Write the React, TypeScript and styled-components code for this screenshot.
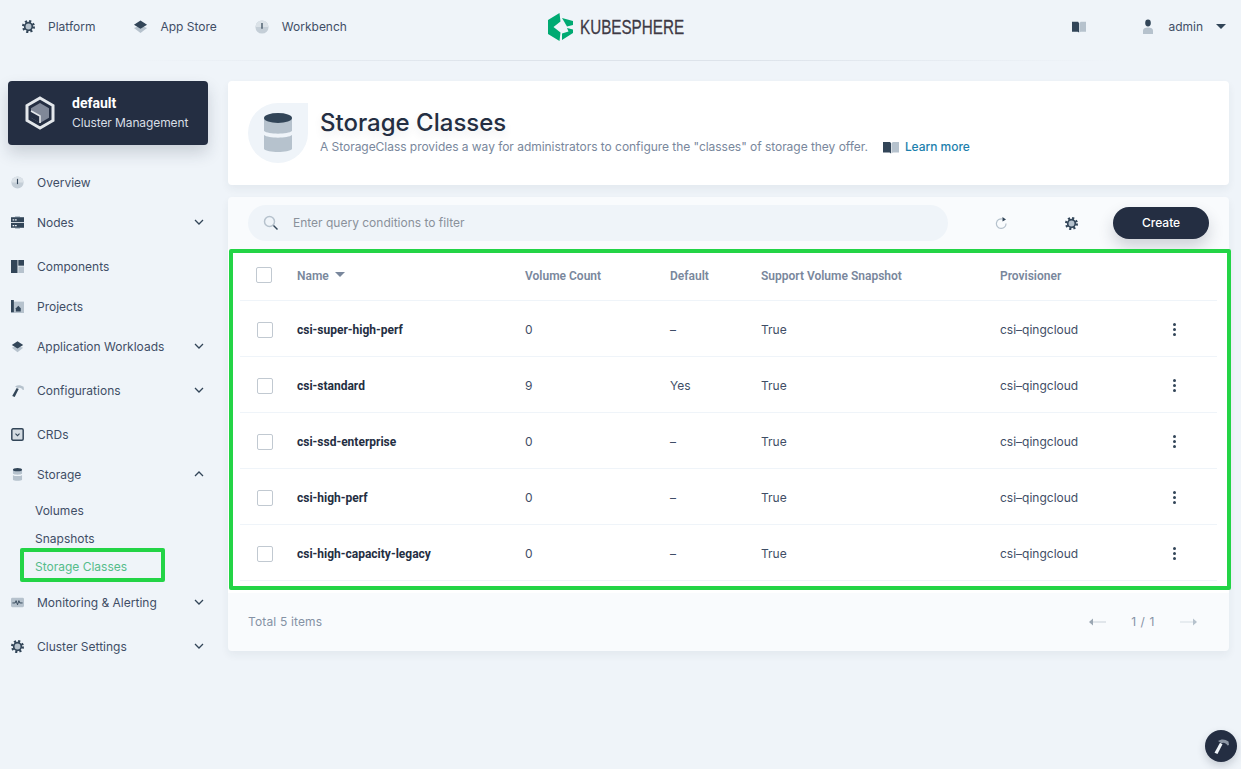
import styled, { createGlobalStyle } from "styled-components";
import type { ReactNode } from "react";

const DARK = "#324558";
const LIGHT = "#b6c2cd";

const GlobalStyle = createGlobalStyle`
  html, body {
    margin: 0;
    padding: 0;
    height: 769px;
    overflow: hidden;
    background: #eff4f9;
    font-family: Inter, "Liberation Sans", sans-serif;
    font-size: 12px;
    color: #242e42;
  }
  * { box-sizing: border-box; }
`;

const Header = styled.header`
  display: grid;
  grid-template-columns: 528px auto 1fr;
  align-items: center;
  height: 61px;
  padding: 0 15px 7px 20px;
  border-bottom: 1px solid transparent;
  border-image: linear-gradient(90deg, #eff4f9 10%, #dde3ea 40%, #dde3ea 60%, #eff4f9 90%) 1;
`;

const TopNav = styled.nav`
  display: flex;
  gap: 37px;
`;

const TopNavItem = styled.div`
  display: flex;
  align-items: center;
  gap: 12px;
  color: #3f4e66;
  line-height: 16px;
`;

const TopIcon = styled.span`
  display: flex;
  justify-content: center;
  width: 16px;
`;

const Logo = styled.div`
  display: flex;
  align-items: center;
  gap: 7px;
`;

const LogoText = styled.span`
  display: block;
  width: 103px;
  font-family: "Liberation Sans", sans-serif;
  font-size: 21px;
  line-height: 24px;
  color: #3e3a45;
  white-space: nowrap;
  transform: scaleX(0.725);
  transform-origin: left center;
  -webkit-text-stroke: 0.3px #3e3a45;
`;

const TopRight = styled.div`
  display: flex;
  align-items: center;
  justify-content: flex-end;
`;

const UserName = styled.span`
  margin: 0 13px 0 13px;
  color: #3f4e66;
`;

const UserIconWrap = styled.span`
  display: flex;
  margin-left: 55px;
`;

const Caret = styled.span`
  width: 0;
  height: 0;
  border-left: 5px solid transparent;
  border-right: 5px solid transparent;
  border-top: 5px solid ${DARK};
`;

const Body = styled.div`
  display: grid;
  grid-template-columns: 228px 1001px;
  padding-top: 20px;
`;

const Sidebar = styled.aside`
  padding-left: 8px;
`;

const ClusterCard = styled.div`
  display: flex;
  align-items: center;
  gap: 16px;
  width: 200px;
  height: 64px;
  margin-bottom: 17px;
  padding-left: 16px;
  background: #242e42;
  border-radius: 4px;
  box-shadow: 0 8px 16px rgba(36, 46, 66, 0.18);
`;

const ClusterName = styled.div`
  font-family: Roboto, Inter, sans-serif;
  font-size: 14px;
  font-weight: 700;
  line-height: 20px;
  color: #fff;
`;

const ClusterRole = styled.div`
  line-height: 20px;
  color: #d8dee5;
  letter-spacing: -0.1px;
`;

const SideMenu = styled.ul`
  list-style: none;
  margin: 0 0 0 -8px;
  padding: 0;
  width: 216px;
`;

const MenuRow = styled.li<{ $expandable?: boolean }>`
  display: flex;
  align-items: center;
  height: 40px;
  padding: 0 11px 0 11px;
  margin-bottom: ${(p) => (p.$expandable ? "4px" : "0")};
  color: #3f4e66;
`;

const MenuIcon = styled.span`
  display: flex;
  width: 26px;
  svg {
    width: 13px;
    height: 13px;
  }
`;

const MenuLabel = styled.span`
  flex: 1;
`;

const SubMenu = styled.ul`
  list-style: none;
  margin: 1px 0 3px;
  padding: 0;
`;

const SubRow = styled.li<{ $active?: boolean }>`
  position: relative;
  height: 28px;
  padding-left: 35px;
  line-height: 31px;
  color: ${(p) => (p.$active ? "#55bc8a" : "#3f4e66")};
`;

const SmallHighlight = styled.span`
  position: absolute;
  left: 20px;
  top: -3px;
  width: 145px;
  height: 34px;
  border: 4px solid #23d446;
  border-radius: 2px;
`;

const Main = styled.main`
  display: flex;
  flex-direction: column;
  gap: 12px;
`;

const Banner = styled.section`
  display: flex;
  align-items: center;
  gap: 12px;
  height: 104px;
  padding-left: 20px;
  background: #fff;
  border-radius: 4px;
  box-shadow: 0 4px 8px rgba(36, 46, 66, 0.06);
`;

const BannerIcon = styled.div`
  display: flex;
  align-items: center;
  justify-content: center;
  width: 60px;
  height: 60px;
  background: #eff4f9;
  border-radius: 50% 0 50% 50%;
`;

const BannerText = styled.div`
  margin-top: -4px;
`;

const Title = styled.h1`
  margin: 0;
  font-size: 24px;
  font-weight: 500;
  line-height: 32px;
  color: #242e42;
  text-shadow: 0 4px 8px rgba(36, 46, 66, 0.1);
`;

const Description = styled.div`
  display: flex;
  align-items: center;
  line-height: 16px;
  color: #79879c;
  letter-spacing: -0.04px;
`;

const LearnMore = styled.a`
  display: flex;
  align-items: center;
  gap: 6px;
  margin-left: 15px;
  color: #1c7fad;
  font-weight: 500;
`;

const Panel = styled.section`
  background: #f9fbfd;
  border-radius: 4px;
  box-shadow: 0 4px 8px rgba(36, 46, 66, 0.06);
`;

const Toolbar = styled.div`
  display: flex;
  align-items: center;
  height: 52px;
  padding: 0 20px;
`;

const SearchBox = styled.div`
  display: flex;
  align-items: center;
  gap: 14px;
  width: 701px;
  height: 36px;
  padding: 0 0 1px 15px;
  background: #eff4f9;
  border-radius: 18px;
  color: #8a919b;
  font-size: 12px;
`;

const ToolIcon = styled.span<{ $left: number }>`
  display: flex;
  margin-left: ${(p) => p.$left}px;
`;

const CreateButton = styled.button`
  width: 96px;
  height: 32px;
  margin-left: 35px;
  padding: 0 0 2px;
  border: 0;
  border-radius: 16px;
  background: #242e42;
  color: #fff;
  font: 500 12px Inter, sans-serif;
  box-shadow: 0 8px 16px rgba(36, 46, 66, 0.2);
`;

const TableWrap = styled.div`
  position: relative;
  padding: 0 12px 12px;
  background: #fff;
`;

const BigHighlight = styled.div`
  position: absolute;
  left: 1px;
  right: -2px;
  top: 0;
  bottom: 3px;
  border: 4px solid #23d446;
  border-radius: 2px;
  pointer-events: none;
`;

const COLUMNS = "57px 228px 145px 91px 239px 173px 1fr";

const HeadRow = styled.div`
  display: grid;
  grid-template-columns: ${COLUMNS};
  align-items: center;
  height: 52px;
  padding-top: 2px;
  border-bottom: 1px solid #eff4f9;
  color: #79879c;
  font-weight: 600;
  font-family: Roboto, Inter, sans-serif;
`;

const DataRow = styled.div`
  display: grid;
  grid-template-columns: ${COLUMNS};
  align-items: center;
  height: 56px;
  padding-top: 2px;
  border-bottom: 1px solid #eff4f9;
  color: #3f4e66;
`;

const CheckBox = styled.span<{ $head?: boolean }>`
  display: block;
  width: 16px;
  height: 16px;
  margin-left: ${(p) => (p.$head ? "16px" : "17px")};
  margin-top: ${(p) => (p.$head ? "-2px" : "0")};
  background: #fff;
  border: 1px solid #c1c9d1;
  border-radius: 2px;
`;

const NameHead = styled.span`
  display: flex;
  align-items: center;
  gap: 6px;
`;

const SortCaret = styled.span`
  width: 0;
  height: 0;
  margin-top: -2px;
  border-left: 5px solid transparent;
  border-right: 5px solid transparent;
  border-top: 5px solid #79879c;
`;

const NameCell = styled.span`
  font-family: Roboto, Inter, sans-serif;
  font-weight: 700;
  color: #242e42;
`;

const Dots = styled.span`
  display: flex;
  flex-direction: column;
  gap: 2px;
`;

const Dot = styled.i`
  display: block;
  width: 3px;
  height: 3px;
  border-radius: 50%;
  background: ${DARK};
`;

const Footer = styled.div`
  display: flex;
  align-items: center;
  justify-content: space-between;
  height: 58px;
  padding: 0 32px 1px 20px;
  color: #8592a5;
  letter-spacing: 0.15px;
`;

const Pager = styled.div`
  display: flex;
  align-items: center;
  gap: 25px;
  color: #8592a5;
  letter-spacing: 0.6px;
`;

const ToolsButton = styled.div`
  position: fixed;
  left: 1205px;
  top: 730px;
  display: flex;
  align-items: center;
  justify-content: center;
  width: 32px;
  height: 32px;
  border-radius: 50%;
  background: #242e42;
  box-shadow: 0 4px 8px rgba(36, 46, 66, 0.2);
`;

function Gear({ size = 13 }: { size?: number }) {
  return (
    <svg width={size} height={size} viewBox="1.500 1.500 13 13">
      <circle cx="8" cy="8" r="5.300" fill="none" stroke={DARK} strokeWidth="2.400" strokeDasharray="2.080 2.080" />
      <circle cx="8" cy="8" r="3.800" fill={LIGHT} stroke={DARK} strokeWidth="1.700" />
    </svg>
  );
}

function Layers({ size = 15 }: { size?: number }) {
  return (
    <svg width={size} height={size} viewBox="0 0 16 16">
      <path d="M1 9.500 8 7l7 2.500L8 15z" fill={LIGHT} />
      <path d="M1 6 8 1.500 15 6l-7 4.500z" fill={DARK} />
    </svg>
  );
}

function Dial({ size = 14 }: { size?: number }) {
  return (
    <svg width={size} height={size} viewBox="0 0 16 16">
      <circle cx="8" cy="8" r="7.500" fill="#c4ced7" />
      <path d="M.5 8A7.500 7.500 0 0 1 15.500 8z" fill="#dbe2e8" />
      <path d="M7.300 3.500h1.400L8.700 10H7.300z" fill={DARK} />
    </svg>
  );
}

function Book({ width = 16, height = 13 }: { width?: number; height?: number }) {
  return (
    <svg width={width} height={height} viewBox="0 0 17 14" preserveAspectRatio="none">
      <path d="M0 1h7.500l1 1.500v11L7 12.500H0z" fill={DARK} />
      <path d="M9 2.500 10.500 1H17v11.500h-6.500L9 13.500z" fill={LIGHT} />
    </svg>
  );
}

function User() {
  return (
    <svg width="14" height="16" viewBox="0 0 14 16">
      <ellipse cx="7" cy="4" rx="2.800" ry="3.400" fill={DARK} />
      <path d="M2 15v-3.500C2 9.500 4 8.500 7 8.500s5 1 5 3V15z" fill={LIGHT} />
    </svg>
  );
}

function Nodes() {
  return (
    <svg viewBox="0 0 16 16">
      <path d="M5 0h6v2H5zM5 14h6v2H5z" fill={LIGHT} />
      <rect y="1.500" width="16" height="6" fill={DARK} />
      <rect y="8.500" width="16" height="6" fill={DARK} />
      <path d="M2 4h2v1.500H2zM5 4h2v1.500H5zM2 11h2v1.500H2zM5 11h2v1.500H5z" fill="#eff4f9" />
    </svg>
  );
}

function Components() {
  return (
    <svg viewBox="0 0 16 16">
      <rect width="8" height="16" fill={DARK} />
      <rect x="9" width="7" height="7" fill={DARK} />
      <rect x="9" y="8" width="7" height="8" fill={LIGHT} />
    </svg>
  );
}

function Projects() {
  return (
    <svg viewBox="0 0 16 16">
      <rect y="2" width="16" height="14" fill={LIGHT} />
      <path d="M0 0h3.500v15H0z" fill={DARK} />
      <path d="M6 14V10l3-3 3 3v4z" fill={DARK} />
    </svg>
  );
}

function Hammer({ light }: { light?: boolean }) {
  return (
    <svg width="16" height="16" viewBox="0 0 16 16">
      <path d="M1.500 14.800 7 4.800l2.500 1.400-5 9.800z" fill={light ? "#eff4f9" : DARK} />
      <path d="M5 3C8 .8 12 .8 15.500 3.500L16 7l-1.500.5C13 5 10.500 4 8.500 5.200z" fill={light ? "#8d97a5" : LIGHT} />
    </svg>
  );
}

function Crds() {
  return (
    <svg viewBox="0 0 16 16">
      <rect x="1" y="1" width="14" height="14" rx="1.500" fill="#d5dce3" stroke={DARK} strokeWidth="1.800" />
      <path d="m5.500 7 2.500 2.500L10.500 7" fill="none" stroke={DARK} strokeWidth="1.300" />
    </svg>
  );
}

function Database({ size = 40 }: { size?: number }) {
  return (
    <svg width={size} height={size} viewBox="0 0 28 40">
      <path d="M0 22c4 3.500 24 3.500 28 0v14c-3 4-25 4-28 0z" fill={LIGHT} />
      <path d="M0 5h28v13c-4 3.500-24 3.500-28 0z" fill={LIGHT} />
      <ellipse cx="14" cy="5" rx="14" ry="5" fill={DARK} />
    </svg>
  );
}

function Monitor() {
  return (
    <svg viewBox="0 0 14 10">
      <rect width="14" height="10" rx="1.500" fill={LIGHT} />
      <path d="M1.500 5.500h3l1-2.500 1.500 4.500L8.500 3l1 2.500h3" fill="none" stroke={DARK} strokeWidth="1" />
    </svg>
  );
}

function Chevron({ up }: { up?: boolean }) {
  return (
    <svg width="12" height="8" viewBox="0 0 12 8">
      <path d={up ? "m2 6 4-4 4 4" : "m2 2 4 4 4-4"} fill="none" stroke={DARK} strokeWidth="1.300" />
    </svg>
  );
}

function ClusterLogo() {
  return (
    <svg width="32" height="34" viewBox="0 0 32 34">
      <path d="M16 2 29 9.500v15L16 32 3 24.500v-15z" fill="#242e42" stroke="#e3e7eb" strokeWidth="3" />
      <path d="M16 7 25 12.300v9.400L16 27 7 21.700v-9.400z" fill="#808898" />
      <path d="M7 15 16 20v7L7 21.700z" fill="#242e42" />
      <path d="M7 15 16 20v7" fill="none" stroke="#e3e7eb" strokeWidth="1.600" />
    </svg>
  );
}

function KubeLogo() {
  return (
    <svg width="25" height="28" viewBox="0 0 25 28">
      <path d="M0 7 11.500 0l1 8.500L5.500 14l7 5.500-1 8.500L0 21z" fill="#00aa72" />
      <path d="M14 5 25 8v4l-6 1.500z" fill="#00aa72" />
      <path d="M19 15l6 1.500V20l-11 7v-6.500l6.500-2z" fill="#00aa72" />
    </svg>
  );
}

function SearchIcon() {
  return (
    <svg width="16" height="16" viewBox="0 0 16 16">
      <circle cx="6.500" cy="6.500" r="5" fill="none" stroke={LIGHT} strokeWidth="1.500" />
      <path d="m10.500 10.500 4 4" stroke={DARK} strokeWidth="1.500" />
    </svg>
  );
}

function Refresh() {
  return (
    <svg width="12" height="12" viewBox="0 0 12 12">
      <path d="M7.500 2A4.800 4.800 0 1 0 11 6.500" fill="none" stroke={LIGHT} strokeWidth="1.200" />
      <path d="M7.500 0 11 2.500 7.500 4.500z" fill={DARK} />
    </svg>
  );
}

function Arrow({ right }: { right?: boolean }) {
  return (
    <svg width="17" height="8" viewBox="0 0 17 8">
      {right ? (
        <>
          <path d="M0 3.500h14v1H0z" fill="#d5dce3" />
          <path d="M13 .5 17 4l-4 3.500z" fill={LIGHT} />
        </>
      ) : (
        <>
          <path d="M3 3.500h14v1H3z" fill="#c9d1d9" />
          <path d="M4 .5 0 4l4 3.500z" fill="#9ba7b3" />
        </>
      )}
    </svg>
  );
}

interface IMenuItem {
  label: string;
  icon: ReactNode;
  expandable?: boolean;
  open?: boolean;
}

const menuItems: IMenuItem[] = [
  { label: "Overview", icon: <Dial /> },
  { label: "Nodes", icon: <Nodes />, expandable: true },
  { label: "Components", icon: <Components /> },
  { label: "Projects", icon: <Projects /> },
  { label: "Application Workloads", icon: <Layers />, expandable: true },
  { label: "Configurations", icon: <Hammer />, expandable: true },
  { label: "CRDs", icon: <Crds /> },
  { label: "Storage", icon: <Database />, open: true },
  { label: "Monitoring & Alerting", icon: <Monitor />, expandable: true },
  { label: "Cluster Settings", icon: <Gear />, expandable: true },
];

interface IStorageClass {
  name: string;
  count: number;
  isDefault: string;
}

const storageClasses: IStorageClass[] = [
  { name: "csi-super-high-perf", count: 0, isDefault: "–" },
  { name: "csi-standard", count: 9, isDefault: "Yes" },
  { name: "csi-ssd-enterprise", count: 0, isDefault: "–" },
  { name: "csi-high-perf", count: 0, isDefault: "–" },
  { name: "csi-high-capacity-legacy", count: 0, isDefault: "–" },
];

export default function App() {
  return (
    <>
      <GlobalStyle />
      <Header>
        <TopNav>
          <TopNavItem>
            <TopIcon>
              <Gear />
            </TopIcon>
            Platform
          </TopNavItem>
          <TopNavItem>
            <TopIcon>
              <Layers />
            </TopIcon>
            App Store
          </TopNavItem>
          <TopNavItem>
            <TopIcon>
              <Dial />
            </TopIcon>
            Workbench
          </TopNavItem>
        </TopNav>
        <Logo>
          <KubeLogo />
          <LogoText>KUBESPHERE</LogoText>
        </Logo>
        <TopRight>
          <Book width={14} height={12} />
          <UserIconWrap>
            <User />
          </UserIconWrap>
          <UserName>admin</UserName>
          <Caret />
        </TopRight>
      </Header>
      <Body>
        <Sidebar>
          <ClusterCard>
            <ClusterLogo />
            <div>
              <ClusterName>default</ClusterName>
              <ClusterRole>Cluster Management</ClusterRole>
            </div>
          </ClusterCard>
          <SideMenu>
            {menuItems.map((item) => (
              <div key={item.label}>
                <MenuRow $expandable={item.expandable}>
                  <MenuIcon>{item.icon}</MenuIcon>
                  <MenuLabel>{item.label}</MenuLabel>
                  {(item.expandable || item.open) && <Chevron up={item.open} />}
                </MenuRow>
                {item.open && (
                  <SubMenu>
                    <SubRow>Volumes</SubRow>
                    <SubRow>Snapshots</SubRow>
                    <SubRow $active>
                      Storage Classes
                      <SmallHighlight />
                    </SubRow>
                  </SubMenu>
                )}
              </div>
            ))}
          </SideMenu>
        </Sidebar>
        <Main>
          <Banner>
            <BannerIcon>
              <Database />
            </BannerIcon>
            <BannerText>
              <Title>Storage Classes</Title>
              <Description>
                A StorageClass provides a way for administrators to configure the "classes" of storage they offer.
                <LearnMore>
                  <Book />
                  Learn more
                </LearnMore>
              </Description>
            </BannerText>
          </Banner>
          <Panel>
            <Toolbar>
              <SearchBox>
                <SearchIcon />
                Enter query conditions to filter
              </SearchBox>
              <ToolIcon $left={47}>
                <Refresh />
              </ToolIcon>
              <ToolIcon $left={58}>
                <Gear />
              </ToolIcon>
              <CreateButton>Create</CreateButton>
            </Toolbar>
            <TableWrap>
              <HeadRow>
                <CheckBox $head />
                <NameHead>
                  Name
                  <SortCaret />
                </NameHead>
                <span>Volume Count</span>
                <span>Default</span>
                <span>Support Volume Snapshot</span>
                <span>Provisioner</span>
              </HeadRow>
              {storageClasses.map((row) => (
                <DataRow key={row.name}>
                  <CheckBox />
                  <NameCell>{row.name}</NameCell>
                  <span>{row.count}</span>
                  <span>{row.isDefault}</span>
                  <span>True</span>
                  <span>csi–qingcloud</span>
                  <Dots>
                    <Dot />
                    <Dot />
                    <Dot />
                  </Dots>
                </DataRow>
              ))}
              <BigHighlight />
            </TableWrap>
            <Footer>
              <span>Total 5 items</span>
              <Pager>
                <Arrow />
                <span>1 / 1</span>
                <Arrow right />
              </Pager>
            </Footer>
          </Panel>
        </Main>
      </Body>
      <ToolsButton>
        <Hammer light />
      </ToolsButton>
    </>
  );
}
